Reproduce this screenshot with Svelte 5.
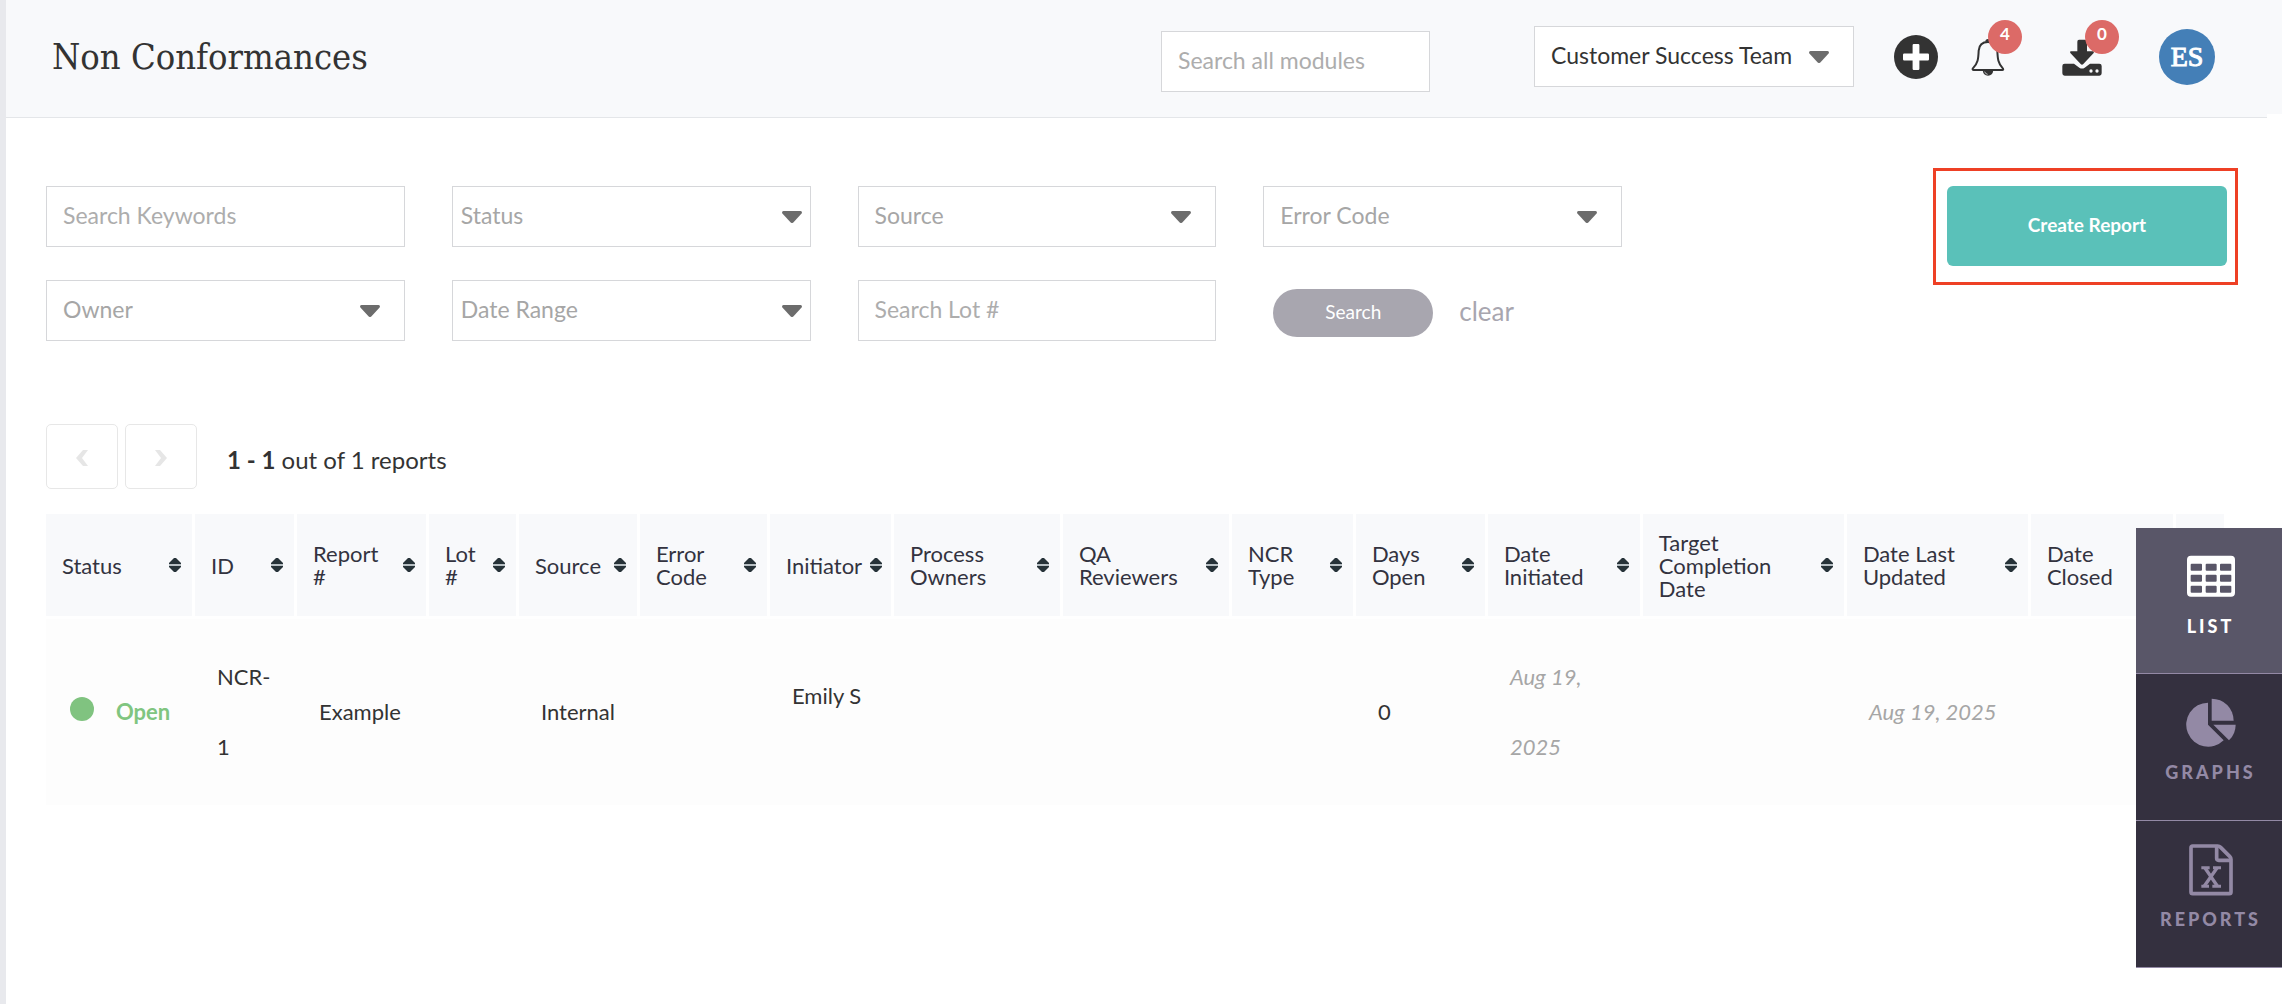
<script lang="ts">
  type Column = { label: string; width: number; sortable?: boolean };

  const columns: Column[] = [
    { label: 'Status', width: 149 },
    { label: 'ID', width: 102 },
    { label: 'Report #', width: 132 },
    { label: 'Lot #', width: 90 },
    { label: 'Source', width: 121 },
    { label: 'Error Code', width: 130 },
    { label: 'Initiator', width: 124 },
    { label: 'Process Owners', width: 169 },
    { label: 'QA Reviewers', width: 169 },
    { label: 'NCR Type', width: 124 },
    { label: 'Days Open', width: 132 },
    { label: 'Date Initiated', width: 155 },
    { label: 'Target Completion Date', width: 204 },
    { label: 'Date Last Updated', width: 184 },
    { label: 'Date Closed', width: 145 },
    { label: '', width: 51, sortable: false },
  ];
  const total = columns.reduce((sum, c) => sum + c.width, 0);

  let view = $state('list');
  let globalSearch = $state('');
  let keywords = $state('');
  let lot = $state('');

  function clear() {
    keywords = '';
    lot = '';
  }
</script>

{#snippet caret()}
  <svg class="caret" viewBox="0 0 20 12" aria-hidden="true">
    <path d="M1.5 0h17a1.5 1.5 0 0 1 1.1 2.4l-8.3 9a1.8 1.8 0 0 1-2.6 0l-8.3-9A1.5 1.5 0 0 1 1.5 0z" />
  </svg>
{/snippet}

{#snippet dropdown(label: string, tight: boolean)}
  <div class="select" class:tight>
    <select class="field placeholder" aria-label={label}>
      <option>{label}</option>
    </select>
    {@render caret()}
  </div>
{/snippet}

<div class="page">
  <header>
    <h1>Non Conformances</h1>
    <div class="global-search">
      <input class="field" type="text" placeholder="Search all modules" aria-label="Search all modules" bind:value={globalSearch} />
    </div>
    <div class="select team">
      <select class="field" aria-label="Team">
        <option>Customer Success Team</option>
      </select>
      {@render caret()}
    </div>
    <div class="actions">
      <button class="icon-button add" aria-label="Add">
        <svg width="44" height="44" viewBox="0 0 44 44">
          <circle cx="22" cy="22" r="22" fill="#333" />
          <path d="M19.8 9h4.4q1.2 0 1.2 1.2v8.4h8.4q1.2 0 1.2 1.2v4.4q0 1.2-1.2 1.2h-8.4v8.4q0 1.2-1.2 1.2h-4.4q-1.2 0-1.2-1.2v-8.4h-8.4q-1.2 0-1.2-1.2v-4.4q0-1.2 1.2-1.2h8.4v-8.4q0-1.2 1.2-1.2z" fill="#fff" />
        </svg>
      </button>
      <button class="icon-button bell" aria-label="Notifications">
        <svg width="34" height="38" viewBox="0 0 102 114">
          <path d="M51 12C31 12 24 24 23 38C22 62 21 76 5 92Q4 96 8 96H94Q98 96 96 92C81 76 80 62 79 38C78 24 71 12 51 12Z" fill="none" stroke="#333" stroke-width="6" />
          <path d="M43 11Q43 3 51 3T59 11Z" fill="#333" />
          <path d="M35 97H67Q65 113 51 113T35 97Z" fill="#333" />
          <path d="M41 101Q43 108 50 109" fill="none" stroke="#f8f9fb" stroke-width="2" />
        </svg>
        <span class="badge">4</span>
      </button>
      <button class="icon-button download" aria-label="Downloads">
        <svg width="40" height="38" viewBox="0 0 120 114">
          <path d="M51 5H69Q75 5 75 11V40H93Q98 40 95 45L64 78Q60 82 56 78L25 45Q22 40 27 40H46V11Q46 5 51 5Z" fill="#333" />
          <path d="M8 77H36L52 89Q60 94 68 89L84 77H112Q119 77 119 84V106Q119 113 112 113H8Q1 113 1 106V84Q1 77 8 77Z" fill="#333" />
          <circle cx="87" cy="99" r="5" fill="#f8f9fb" />
          <circle cx="105" cy="99" r="5" fill="#f8f9fb" />
        </svg>
        <span class="badge">0</span>
      </button>
      <button class="avatar">ES</button>
    </div>
  </header>

  <main>
    <section class="toolbar">
      <form class="filters" onsubmit={(e) => e.preventDefault()}>
        <input class="field" type="text" placeholder="Search Keywords" aria-label="Search Keywords" bind:value={keywords} />
        {@render dropdown('Status', true)}
        {@render dropdown('Source', false)}
        {@render dropdown('Error Code', false)}
        {@render dropdown('Owner', false)}
        {@render dropdown('Date Range', true)}
        <input class="field" type="text" placeholder="Search Lot #" aria-label="Search Lot #" bind:value={lot} />
        <div class="submit">
          <button class="search" type="submit">Search</button>
          <button class="clear" type="button" onclick={clear}>clear</button>
        </div>
      </form>
      <div class="highlight">
        <button class="create">Create Report</button>
      </div>
    </section>

    <nav class="pager" aria-label="Pagination">
      <button aria-label="Previous page" disabled>
        <svg width="12" height="16" viewBox="0 0 12 16"><path d="M7 0H12L6 8L12 16H7L0 8Z" /></svg>
      </button>
      <button aria-label="Next page" disabled>
        <svg width="12" height="16" viewBox="0 0 12 16"><path d="M5 0H0L6 8L0 16H5L12 8Z" /></svg>
      </button>
      <p><b>1 - 1</b> out of 1 reports</p>
    </nav>

    <table>
      <colgroup>
        {#each columns as column}
          <col style="width: {(column.width / total) * 100}%" />
        {/each}
      </colgroup>
      <thead>
        <tr>
          {#each columns as column}
            <th scope="col">
              {#if column.sortable !== false}
                <button class="sort">
                  <span>{column.label}</span>
                  <svg width="12" height="14" viewBox="0 0 12 14" aria-hidden="true">
                    <path d="M5 0H7L12 5V6H0V5Z" fill="#263238" />
                    <path d="M0 6H12V8H0Z" fill="#b8c0c4" />
                    <path d="M0 8H12V9L7 14H5L0 9Z" fill="#263238" />
                  </svg>
                </button>
              {/if}
            </th>
          {/each}
        </tr>
      </thead>
      <tbody>
        <tr>
          <td><span class="status"><i class="dot"></i>Open</span></td>
          <td>NCR-<br />1</td>
          <td>Example</td>
          <td></td>
          <td>Internal</td>
          <td></td>
          <td class="person">Emily S</td>
          <td></td>
          <td></td>
          <td></td>
          <td>0</td>
          <td class="date">Aug 19,<br />2025</td>
          <td></td>
          <td class="date">Aug 19, 2025</td>
          <td></td>
          <td></td>
        </tr>
      </tbody>
    </table>
  </main>

  <aside>
    <button class:active={view === 'list'} onclick={() => (view = 'list')}>
      <svg width="48" height="52" viewBox="0 0 144 156">
        <path
          fill="currentColor"
          fill-rule="evenodd"
          d="M12 14H132Q144 14 144 26V125Q144 137 132 137H12Q0 137 0 125V26Q0 14 12 14ZM14 38Q11 38 11 41V56Q11 59 14 59H42Q45 59 45 56V41Q45 38 42 38ZM59 38Q56 38 56 41V56Q56 59 59 59H86Q89 59 89 56V41Q89 38 86 38ZM102 38Q99 38 99 41V56Q99 59 102 59H130Q133 59 133 56V41Q133 38 130 38ZM14 71Q11 71 11 74V89Q11 92 14 92H42Q45 92 45 89V74Q45 71 42 71ZM59 71Q56 71 56 74V89Q56 92 59 92H86Q89 92 89 89V74Q89 71 86 71ZM102 71Q99 71 99 74V89Q99 92 102 92H130Q133 92 133 89V74Q133 71 130 71ZM14 104Q11 104 11 107V122Q11 125 14 125H42Q45 125 45 122V107Q45 104 42 104ZM59 104Q56 104 56 107V122Q56 125 59 125H86Q89 125 89 122V107Q89 104 86 104ZM102 104Q99 104 99 107V122Q99 125 102 125H130Q133 125 133 122V107Q133 104 130 104Z"
        />
      </svg>
      LIST
    </button>
    <button class:active={view === 'graphs'} onclick={() => (view = 'graphs')}>
      <svg width="50" height="52" viewBox="0 0 150 156">
        <g fill="currentColor">
          <path d="M66 17A66 66 0 1 0 113 130L66 83Z" />
          <path d="M77 5A66 66 0 0 1 143 71H77Z" />
          <path d="M82 83H149A66 66 0 0 1 129 130Z" />
        </g>
      </svg>
      GRAPHS
    </button>
    <button class:active={view === 'reports'} onclick={() => (view = 'reports')}>
      <svg width="44" height="52" viewBox="0 0 132 156">
        <g fill="none" stroke="currentColor" stroke-width="11" stroke-linejoin="round">
          <path d="M11 6H86Q91 6 95 10L122 37Q126 41 126 46V144Q126 149 121 149H11Q6 149 6 144V11Q6 6 11 6Z" />
          <path d="M83 8V43Q83 49 89 49H124" />
          <path d="M48 72L85 126M84 72L46 126" stroke-width="10" />
          <path d="M37 71H62M72 71H96M37 127H60M70 127H96" stroke-width="9" stroke-linejoin="miter" />
        </g>
      </svg>
      REPORTS
    </button>
  </aside>
</div>

<style>
  :global(body) {
    margin: 0;
    background: #fff;
    color: #333;
    font-family: Lato, 'Open Sans', sans-serif;
  }

  button,
  input,
  select {
    font-family: inherit;
    margin: 0;
  }

  button {
    padding: 0;
    border: none;
    background: none;
    cursor: pointer;
  }

  .page {
    position: relative;
    box-sizing: border-box;
    min-height: 100vh;
    border-left: 6px solid #e8e9ed;
  }

  header {
    position: relative;
    display: flex;
    align-items: center;
    box-sizing: border-box;
    height: 118px;
    padding: 0 67px 4px 46px;
    background: #f8f9fb;
    border-bottom: 1px solid #e4e6e9;
  }

  /* scrollbar gutter below the bar */
  header::after {
    content: '';
    position: absolute;
    right: 0;
    bottom: -1px;
    width: 15px;
    height: 4px;
    background: #fff;
  }

  h1 {
    flex: 1;
    margin: 0;
    font-family: 'DejaVu Serif Condensed', 'DejaVu Serif', serif;
    font-stretch: condensed;
    font-size: 36px;
    font-weight: 400;
    line-height: 44px;
  }

  .field {
    box-sizing: border-box;
    width: 100%;
    height: 61px;
    padding: 0 16px 3px;
    border: 1px solid #d6d7da;
    border-radius: 0;
    background: #fff;
    color: #333;
    font-size: 23px;
    outline: none;
    appearance: none;
  }

  .field::placeholder {
    color: #adadad;
    opacity: 1;
  }

  .field.placeholder {
    color: #a6a6a6;
  }

  .field:focus {
    border-color: #58c1b8;
  }

  .select {
    display: grid;
    align-items: center;
  }

  .select > :global(*) {
    grid-area: 1 / 1;
  }

  .caret {
    justify-self: end;
    width: 20px;
    height: 12px;
    margin-right: 25px;
    fill: #6c6c6c;
    pointer-events: none;
  }

  .tight .field {
    padding: 0 8px 3px;
  }

  .tight .caret {
    margin-right: 9px;
  }

  .global-search {
    width: 269px;
    margin-right: 104px;
    padding-top: 10px;
  }

  .team {
    width: 320px;
    margin-right: 40px;
  }

  .actions {
    display: flex;
    align-items: center;
  }

  .icon-button {
    position: relative;
    display: flex;
  }

  .add {
    margin-right: 33px;
  }

  .bell {
    margin-right: 57px;
  }

  .download {
    margin-right: 57px;
  }

  .badge {
    position: absolute;
    top: -18px;
    right: -17px;
    width: 34px;
    height: 34px;
    border-radius: 50%;
    background: #dc6a67;
    color: #fff;
    font-size: 17px;
    font-weight: 700;
    line-height: 28px;
    text-align: center;
  }

  .avatar {
    width: 56px;
    height: 56px;
    border-radius: 50%;
    background: #447fb7;
    color: #fff;
    font-family: 'Liberation Serif', serif;
    font-size: 28px;
    font-weight: 400;
    -webkit-text-stroke: 1px #fff;
  }

  main {
    padding: 50px 44px 0 40px;
  }

  .toolbar {
    display: flex;
    justify-content: space-between;
    align-items: flex-start;
  }

  .filters {
    display: grid;
    grid-template-columns: repeat(4, 1fr);
    gap: 33px 47px;
    width: 71.9%;
    padding-top: 18px;
  }

  .submit {
    display: flex;
    align-items: center;
    gap: 26px;
    padding: 4px 0 0 10px;
  }

  .search {
    width: 160px;
    height: 48px;
    padding-bottom: 3px;
    border-radius: 24px;
    background: #a8a6af;
    color: #fff;
    font-size: 19px;
  }

  .clear {
    padding-bottom: 3px;
    color: #a8a6af;
    font-size: 26px;
  }

  .highlight {
    padding: 15px 8px 16px 11px;
    border: 3px solid #ee4025;
  }

  .create {
    display: block;
    width: 280px;
    height: 80px;
    padding-bottom: 3px;
    border-radius: 6px;
    background: #5ac1b9;
    color: #fff;
    font-size: 19px;
    font-weight: 700;
  }

  .pager {
    display: flex;
    align-items: center;
    gap: 7px;
    margin-top: 83px;
  }

  .pager button {
    display: flex;
    align-items: center;
    justify-content: center;
    box-sizing: border-box;
    width: 72px;
    height: 65px;
    padding-top: 2px;
    border: 1px solid #e7e7e7;
    border-radius: 5px;
    background: #fff;
  }

  .pager path {
    fill: #e6e6e6;
  }

  .pager p {
    margin: 0 0 0 23px;
    padding-top: 7px;
    font-size: 24px;
    line-height: 32px;
  }

  table {
    width: calc(100% - 11px);
    margin-top: 25px;
    border-spacing: 0;
    table-layout: fixed;
  }

  th {
    box-sizing: border-box;
    height: 105px;
    padding: 0;
    border-right: 3px solid #fff;
    border-bottom: 3px solid #fff;
    background: #f8f9fb;
  }

  .sort {
    display: flex;
    align-items: center;
    justify-content: space-between;
    gap: 8px;
    box-sizing: border-box;
    width: 100%;
    padding: 0 11px 0 16px;
    color: #33333f;
    font-size: 22px;
    line-height: 23px;
    text-align: left;
  }

  .sort svg {
    flex: none;
  }

  td {
    box-sizing: border-box;
    height: 186px;
    padding: 0 0 0 22px;
    background: #fdfdfd;
    font-size: 22px;
    line-height: 70px;
    white-space: nowrap;
  }

  .status {
    display: flex;
    align-items: center;
    gap: 22px;
    padding-left: 2px;
    color: #80c580;
    font-weight: 700;
  }

  .dot {
    width: 24px;
    height: 24px;
    margin-bottom: 6px;
    border-radius: 50%;
    background: #80c380;
  }

  td.person {
    padding-bottom: 32px;
  }

  .date {
    color: #a6a6a6;
    font-style: italic;
  }

  aside {
    position: absolute;
    top: 528px;
    right: 0;
    width: 146px;
  }

  aside button {
    display: flex;
    flex-direction: column;
    align-items: center;
    gap: 8px;
    box-sizing: border-box;
    width: 100%;
    height: 147px;
    padding: 23px 0 0 3px;
    border-bottom: 1px solid #9389a5;
    background: #34303f;
    color: #9389a5;
    font-size: 18px;
    font-weight: 900;
    line-height: 30px;
    letter-spacing: 3px;
  }

  aside button:first-child {
    height: 146px;
  }

  aside button.active {
    background: #595668;
    color: #fff;
  }
</style>
